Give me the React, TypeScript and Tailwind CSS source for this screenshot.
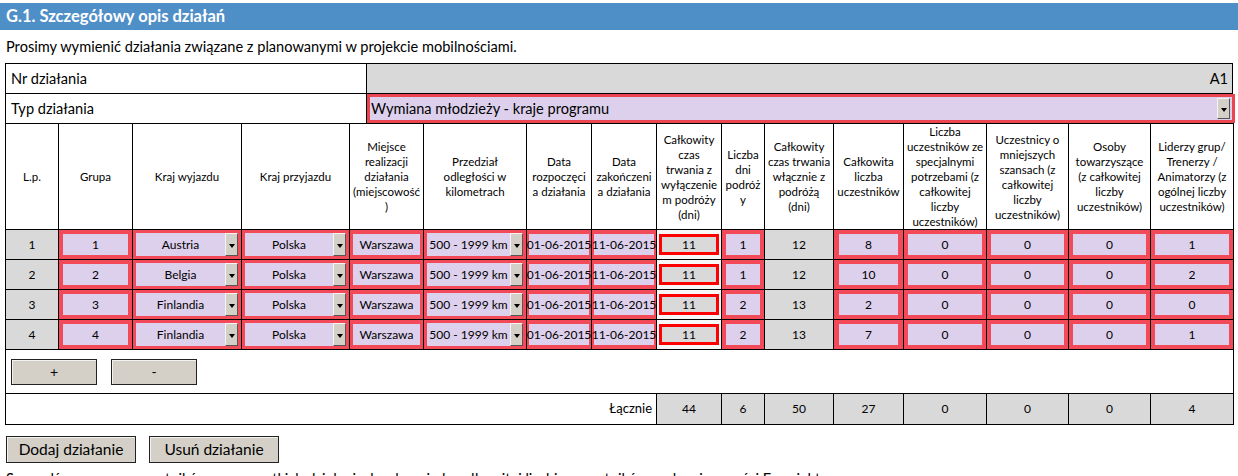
import React from "react";

type Row = {
  lp: number;
  grupa: string;
  wyjazd: string;
  przyjazd: string;
  miejsce: string;
  km: string;
  od: string;
  doo: string;
  czas: string;
  dni: string;
  calk: string;
  uczest: string;
  spec: string;
  mniej: string;
  tow: string;
  lid: string;
};

const rows: Row[] = [
  { lp: 1, grupa: "1", wyjazd: "Austria", przyjazd: "Polska", miejsce: "Warszawa", km: "500 - 1999 km", od: "01-06-2015", doo: "11-06-2015", czas: "11", dni: "1", calk: "12", uczest: "8", spec: "0", mniej: "0", tow: "0", lid: "1" },
  { lp: 2, grupa: "2", wyjazd: "Belgia", przyjazd: "Polska", miejsce: "Warszawa", km: "500 - 1999 km", od: "01-06-2015", doo: "11-06-2015", czas: "11", dni: "1", calk: "12", uczest: "10", spec: "0", mniej: "0", tow: "0", lid: "2" },
  { lp: 3, grupa: "3", wyjazd: "Finlandia", przyjazd: "Polska", miejsce: "Warszawa", km: "500 - 1999 km", od: "01-06-2015", doo: "11-06-2015", czas: "11", dni: "2", calk: "13", uczest: "2", spec: "0", mniej: "0", tow: "0", lid: "0" },
  { lp: 4, grupa: "4", wyjazd: "Finlandia", przyjazd: "Polska", miejsce: "Warszawa", km: "500 - 1999 km", od: "01-06-2015", doo: "11-06-2015", czas: "11", dni: "2", calk: "13", uczest: "7", spec: "0", mniej: "0", tow: "0", lid: "1" },
];

const headers: string[][] = [
  ["L.p."],
  ["Grupa"],
  ["Kraj wyjazdu"],
  ["Kraj przyjazdu"],
  ["Miejsce", "realizacji", "działania", "(miejscowość", ")"],
  ["Przedział", "odległości w", "kilometrach"],
  ["Data", "rozpoczęci", "a działania"],
  ["Data", "zakończeni", "a działania"],
  ["Całkowity", "czas", "trwania z", "wyłączenie", "m podróży", "(dni)"],
  ["Liczba", "dni", "podróż", "y"],
  ["Całkowity", "czas trwania", "włącznie z", "podróżą", "(dni)"],
  ["Całkowita", "liczba", "uczestników"],
  ["Liczba", "uczestników ze", "specjalnymi", "potrzebami (z", "całkowitej", "liczby", "uczestników)"],
  ["Uczestnicy o", "mniejszych", "szansach (z", "całkowitej", "liczby", "uczestników)"],
  ["Osoby", "towarzyszące", "(z całkowitej", "liczby", "uczestników)"],
  ["Liderzy grup/", "Trenerzy /", "Animatorzy (z", "ogólnej liczby", "uczestników)"],
];

const totals = ["44", "6", "50", "27", "0", "0", "0", "4"];

function DropButton() {
  return (
    <div className="w-[13px] h-full shrink-0 bg-[#d4d0c8] border border-t-[#f4f4f4] border-l-[#f4f4f4] border-r-[#555] border-b-[#555] flex items-center justify-center pt-[2px]">
      <div className="w-0 h-0 border-x-[3px] border-x-transparent border-t-[4px] border-t-black" />
    </div>
  );
}

// red (invalid) cell with lavender input inside
function RedCell({ value, px = "px-[4px]" }: { value: string; px?: string }) {
  return (
    <td className={`border border-black bg-[#f34a59] py-[4px] ${px}`}>
      <div className="h-[21px] bg-[#ddd0ec] flex items-center justify-center text-[12px] whitespace-nowrap overflow-visible">
        {value}
      </div>
    </td>
  );
}

function SelectCell({ value }: { value: string }) {
  return (
    <td className="border border-black bg-[#f34a59] p-[3px]">
      <div className="h-[23px] flex">
        <div className="flex-1 bg-[#ddd0ec] flex items-center justify-center text-[12px] whitespace-nowrap">
          {value}
        </div>
        <DropButton />
      </div>
    </td>
  );
}

function GreyCell({ value }: { value: string | number }) {
  return (
    <td className="border border-black bg-[#d9d9d9] text-center text-[12px]">
      {value}
    </td>
  );
}

function Button({ label, className }: { label: string; className: string }) {
  return (
    <button
      className={`bg-[#d4d0c8] border border-[#222] shadow-[inset_1px_1px_0_#f2f2f2] flex items-center justify-center text-black ${className}`}
    >
      {label}
    </button>
  );
}

export default function App() {
  return (
    <div className="w-[1238px] h-[476px] overflow-hidden bg-white text-black font-[Lato,sans-serif]">
      <div className="mt-[3px] h-[27px] bg-[#4f8fc8] flex items-center pl-[6px]">
        <h1 className="text-white font-bold text-[16.5px]">G.1. Szczegółowy opis działań</h1>
      </div>
      <p className="mt-[7px] mb-[6px] pl-[6px] text-[14.6px] leading-[20px]">
        Prosimy wymienić działania związane z planowanymi w projekcie mobilnościami.
      </p>

      <div className="ml-[5px] w-[1228px]">
        {/* Nr / Typ działania */}
        <div className="border-x border-t border-black">
          <div className="flex h-[30px] border-b border-black">
            <div className="w-[361px] border-r border-black flex items-center pl-[5px] text-[14.6px]">
              Nr działania
            </div>
            <div className="flex-1 bg-[#d9d9d9] flex items-center justify-end pr-[4px] text-[14.6px]">
              A1
            </div>
          </div>
          <div className="flex h-[29px]">
            <div className="w-[361px] border-r border-black flex items-center pl-[5px] text-[14.6px]">
              Typ działania
            </div>
            <div className="flex-1 -mr-[3px] border-[3px] border-[#ea4652] bg-[#ddd0ec] flex items-stretch pl-[1px] pr-[2px] py-[1px] text-[14.6px]">
              <span className="flex-1 flex items-center">Wymiana młodzieży - kraje programu</span>
              <DropButton />
            </div>
          </div>
        </div>

        <table className="table-fixed border-collapse w-[1228px]">
          <colgroup>
            <col className="w-[53px]" />
            <col className="w-[74px]" />
            <col className="w-[109px]" />
            <col className="w-[108px]" />
            <col className="w-[74px]" />
            <col className="w-[103px]" />
            <col className="w-[65px]" />
            <col className="w-[65px]" />
            <col className="w-[65px]" />
            <col className="w-[43px]" />
            <col className="w-[69px]" />
            <col className="w-[70px]" />
            <col className="w-[83px]" />
            <col className="w-[82px]" />
            <col className="w-[82px]" />
            <col className="w-[83px]" />
          </colgroup>
          <thead>
            <tr className="h-[104px]">
              {headers.map((lines, i) => (
                <th
                  key={i}
                  className="border border-black font-normal text-[11.5px] leading-[15px] text-center align-middle p-0 overflow-hidden whitespace-nowrap"
                >
                  {lines.map((l, j) => (
                    <div key={j}>{l}</div>
                  ))}
                </th>
              ))}
            </tr>
          </thead>
          <tbody>
            {rows.map((r) => (
              <tr key={r.lp} className="h-[30px]">
                <GreyCell value={r.lp} />
                <RedCell value={r.grupa} />
                <SelectCell value={r.wyjazd} />
                <SelectCell value={r.przyjazd} />
                <RedCell value={r.miejsce} px="px-[3px]" />
                <SelectCell value={r.km} />
                <RedCell value={r.od} px="px-[2px]" />
                <RedCell value={r.doo} px="px-[2px]" />
                <td className="border border-black bg-[#f7f7f7] px-[2px] py-[4px]">
                  <div className="h-[21px] border-[3px] border-[#ff0000] bg-[#d9d9d9] flex items-center justify-center text-[12px]">
                    {r.czas}
                  </div>
                </td>
                <RedCell value={r.dni} />
                <GreyCell value={r.calk} />
                <RedCell value={r.uczest} px="px-[5px]" />
                <RedCell value={r.spec} />
                <RedCell value={r.mniej} />
                <RedCell value={r.tow} />
                <RedCell value={r.lid} />
              </tr>
            ))}
            <tr className="h-[44px]">
              <td colSpan={16} className="border border-black px-[5px]">
                <div className="flex gap-[14px]">
                  <Button label="+" className="w-[86px] h-[26px] text-[14px]" />
                  <Button label="-" className="w-[86px] h-[26px] text-[14px]" />
                </div>
              </td>
            </tr>
            <tr className="h-[31px]">
              <td colSpan={8} className="border border-black text-right pr-[4px] text-[13px]">
                Łącznie
              </td>
              {totals.map((t, i) => (
                <GreyCell key={i} value={t} />
              ))}
            </tr>
          </tbody>
        </table>
      </div>

      <div className="mt-[11px] ml-[6px] flex gap-[13px]">
        <Button label="Dodaj działanie" className="w-[130px] h-[27px] text-[15.5px]" />
        <Button label="Usuń działanie" className="w-[130px] h-[27px] text-[15.5px]" />
      </div>
      <p className="mt-[6px] pl-[6px] text-[14.6px] leading-[20px] whitespace-nowrap">
        Sprawdź, czy suma uczestników we wszystkich działaniach odpowiada całkowitej liczbie uczestników podanej w części E projektu.
      </p>
    </div>
  );
}
